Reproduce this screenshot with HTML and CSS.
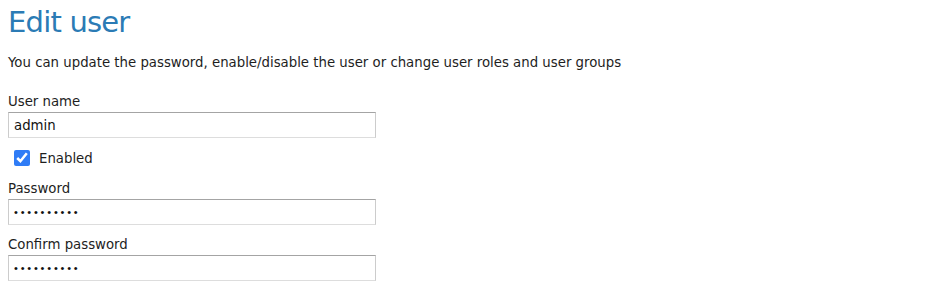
FILE: index.html
```
<!DOCTYPE html>
<html lang="en">
<head>
    <meta charset="UTF-8">
    <title>Edit user</title>
    <link rel="stylesheet" href="styles.css">
</head>
<body>

<div class="page">
    <h1>Edit user</h1>
    <p class="intro">You can update the password, enable/disable the user or change user roles and user groups</p>

    <form class="user-form">
        <div class="field">
            <label for="username">User name</label>
            <input type="text" id="username" value="admin">
        </div>
        <div class="check-row">
            <input type="checkbox" id="enabled" checked>
            <label for="enabled">Enabled</label>
        </div>
        <div class="field">
            <label for="password">Password</label>
            <input type="password" id="password" value="secret1234">
        </div>
        <div class="field">
            <label for="confirm">Confirm password</label>
            <input type="password" id="confirm" value="secret1234">
        </div>
    </form>
</div>

</body>
</html>
```

FILE: styles.css
```
body {
    font-family: "DejaVu Sans", Verdana, sans-serif;
    font-size: 13.3px;
    color: #1e1e1e;
    background: #fff;
    margin: 0;
    padding: 0 8px;
}
h1 {
    font-size: 29px;
    letter-spacing: -0.8px;
    font-weight: normal;
    color: #2b7bb5;
    margin: 3px 0 0;
    line-height: 38px;
}
.intro {
    margin: 14px 0 23px;
    line-height: 16px;
}
.field {
    display: flex;
    flex-direction: column;
    gap: 2px;
    margin-bottom: 12px;
}
.field label {
    line-height: 16px;
}
.field input {
    width: 368px;
    height: 26px;
    box-sizing: border-box;
    border: 1px solid #ccc;
    border-top-color: #a4a4a4;
    border-bottom-color: #ddd;
    padding: 0 5px;
    font-family: inherit;
    font-size: 13.3px;
    color: #111;
    margin: 0;
}
.field input[type="password"] {
    font-family: "Liberation Sans", Arial, sans-serif;
    font-size: 11px;
    letter-spacing: 2.8px;
}
.check-row {
    display: flex;
    align-items: center;
    gap: 9px;
    margin: 2px 0 15px 6px;
}
.check-row input {
    width: 16px;
    height: 16px;
    margin: 0;
    accent-color: #2f7cf6;
}
```
